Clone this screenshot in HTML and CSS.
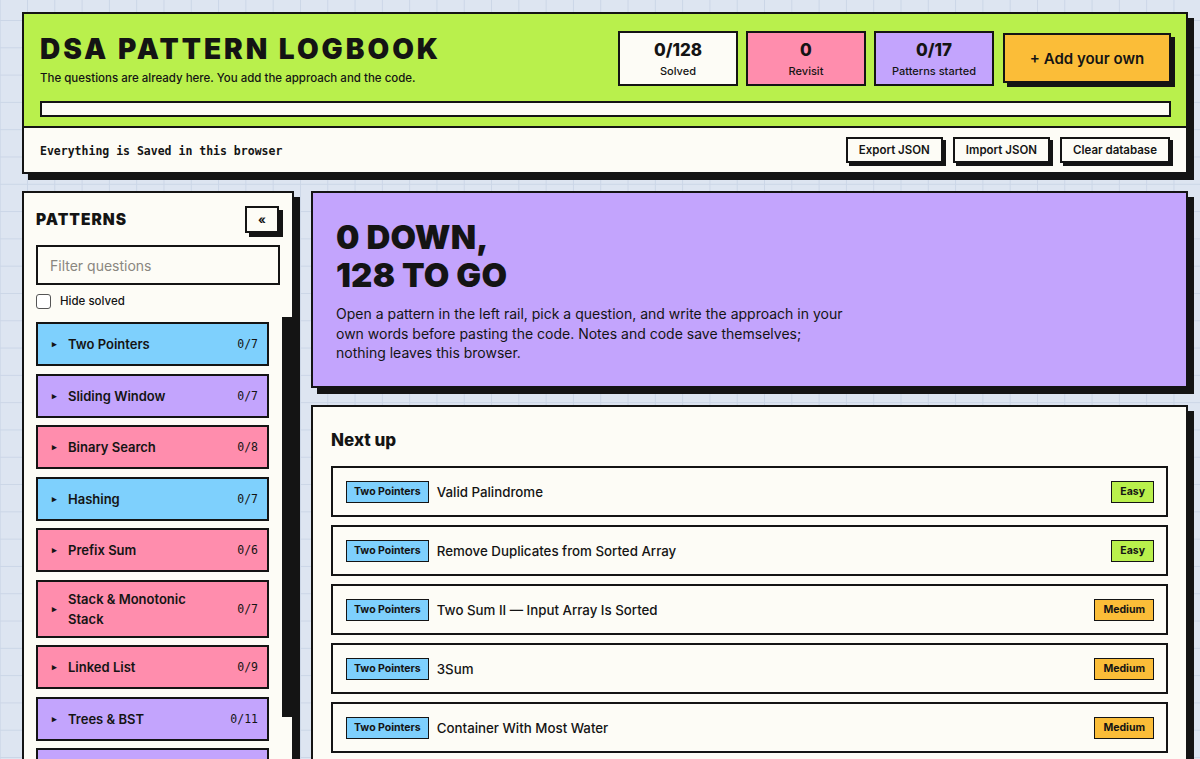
FILE: index.html
```html
<!DOCTYPE html>
<html lang="en">
<head>
<meta charset="utf-8">
<title>DSA Pattern Logbook</title>
<link rel="stylesheet" href="styles.css">
</head>
<body>
<div class="page">
  <header class="masthead">
    <div class="mast-top">
      <div class="mast-row">
        <div class="brand">
          <h1 class="brand-title">DSA PATTERN LOGBOOK</h1>
          <p class="brand-sub">The questions are already here. You add the approach and the code.</p>
        </div>
        <div class="stats">
          <div class="stat stat-cream"><div class="stat-num">0/128</div><div class="stat-label">Solved</div></div>
          <div class="stat stat-pink"><div class="stat-num">0</div><div class="stat-label">Revisit</div></div>
          <div class="stat stat-purple"><div class="stat-num">0/17</div><div class="stat-label">Patterns started</div></div>
          <button class="add-btn">+ Add your own</button>
        </div>
      </div>
      <div class="progress"><div class="progress-fill" style="width:0%"></div></div>
    </div>
    <div class="mast-bottom">
      <span class="saved-note">Everything is Saved in this browser</span>
      <div class="tools">
        <button class="tool-btn">Export JSON</button>
        <button class="tool-btn">Import JSON</button>
        <button class="tool-btn">Clear database</button>
      </div>
    </div>
  </header>

  <div class="layout">
    <aside class="rail">
      <div class="rail-head">
        <div class="rail-title-row">
          <h2 class="rail-title">PATTERNS</h2>
          <button class="collapse-btn">«</button>
        </div>
        <input class="filter" type="text" placeholder="Filter questions">
        <label class="hide-solved"><span class="box"></span>Hide solved</label>
      </div>
      <div class="pattern-list">
        <div class="pattern p-blue"><span class="tri">▸</span><span class="p-name">Two Pointers</span><span class="p-count">0/7</span></div>
        <div class="pattern p-purple"><span class="tri">▸</span><span class="p-name">Sliding Window</span><span class="p-count">0/7</span></div>
        <div class="pattern p-pink"><span class="tri">▸</span><span class="p-name">Binary Search</span><span class="p-count">0/8</span></div>
        <div class="pattern p-blue"><span class="tri">▸</span><span class="p-name">Hashing</span><span class="p-count">0/7</span></div>
        <div class="pattern p-pink"><span class="tri">▸</span><span class="p-name">Prefix Sum</span><span class="p-count">0/6</span></div>
        <div class="pattern p-pink"><span class="tri">▸</span><span class="p-name">Stack &amp; Monotonic Stack</span><span class="p-count">0/7</span></div>
        <div class="pattern p-pink"><span class="tri">▸</span><span class="p-name">Linked List</span><span class="p-count">0/9</span></div>
        <div class="pattern p-purple"><span class="tri">▸</span><span class="p-name">Trees &amp; BST</span><span class="p-count">0/11</span></div>
        <div class="pattern p-purple"><span class="tri">▸</span><span class="p-name">Graphs</span><span class="p-count">0/10</span></div>
        <div class="pattern p-blue"><span class="tri">▸</span><span class="p-name">Heaps</span><span class="p-count">0/7</span></div>
        <div class="pattern p-pink"><span class="tri">▸</span><span class="p-name">Backtracking</span><span class="p-count">0/8</span></div>
        <div class="pattern p-purple"><span class="tri">▸</span><span class="p-name">Dynamic Programming</span><span class="p-count">0/9</span></div>
        <div class="pattern p-blue"><span class="tri">▸</span><span class="p-name">2D DP</span><span class="p-count">0/7</span></div>
        <div class="pattern p-pink"><span class="tri">▸</span><span class="p-name">Greedy</span><span class="p-count">0/7</span></div>
        <div class="pattern p-purple"><span class="tri">▸</span><span class="p-name">Intervals</span><span class="p-count">0/6</span></div>
        <div class="pattern p-blue"><span class="tri">▸</span><span class="p-name">Tries</span><span class="p-count">0/4</span></div>
        <div class="pattern p-pink"><span class="tri">▸</span><span class="p-name">Union Find</span><span class="p-count">0/8</span></div>
      </div>
      <div class="rail-thumb"></div>
    </aside>

    <main class="main">
      <section class="hero">
        <h2 class="hero-title">0 DOWN,<br>128 TO GO</h2>
        <p class="hero-text">Open a pattern in the left rail, pick a question, and write the approach in your own words before pasting the code. Notes and code save themselves; nothing leaves this browser.</p>
      </section>

      <section class="next">
        <h3 class="next-title">Next up</h3>
        <div class="q-list">
          <div class="q"><span class="tag">Two Pointers</span><span class="q-name">Valid Palindrome</span><span class="diff diff-easy">Easy</span></div>
          <div class="q"><span class="tag">Two Pointers</span><span class="q-name">Remove Duplicates from Sorted Array</span><span class="diff diff-easy">Easy</span></div>
          <div class="q"><span class="tag">Two Pointers</span><span class="q-name">Two Sum II — Input Array Is Sorted</span><span class="diff diff-med">Medium</span></div>
          <div class="q"><span class="tag">Two Pointers</span><span class="q-name">3Sum</span><span class="diff diff-med">Medium</span></div>
          <div class="q"><span class="tag">Two Pointers</span><span class="q-name">Container With Most Water</span><span class="diff diff-med">Medium</span></div>
        </div>
      </section>
    </main>
  </div>
</div>
</body>
</html>
```

FILE: styles.css
```css
* { box-sizing: border-box; }

html, body { height: 100%; }

body {
  margin: 0;
  font-family: "Inter", "Noto Sans", sans-serif;
  color: #141414;
  background-color: #dde5f1;
  background-image:
    linear-gradient(#cbd6e7 1px, transparent 1px),
    linear-gradient(90deg, #cbd6e7 1px, transparent 1px);
  background-size: 27.3px 27.3px;
  background-position: 27px 20px;
  overflow: hidden;
}

.page {
  padding: 12px 12px 0 22px;
}

/* ---------- Masthead ---------- */
.masthead {
  border: 2px solid #141414;
  box-shadow: 6px 6px 0 #141414;
  background: #fdfcf6;
}

.mast-top {
  background: #b9f04c;
  padding: 17px 15px 9px 16px;
  border-bottom: 2px solid #141414;
}

.mast-row {
  display: flex;
  justify-content: space-between;
  align-items: flex-start;
}

.brand-title {
  margin: 1px 0 0 0;
  font-size: 28px;
  line-height: 34px;
  font-weight: 900;
  letter-spacing: 3px;
}

.brand-sub {
  margin: 4px 0 0 0;
  font-size: 11.5px;
  line-height: 16px;
  font-weight: 500;
}

.stats {
  display: flex;
  align-items: flex-start;
  gap: 8px;
}

.stat {
  width: 120px;
  height: 55px;
  border: 2px solid #141414;
  display: flex;
  flex-direction: column;
  align-items: center;
  justify-content: center;
  gap: 4px;
}

.stat-num {
  font-size: 17px;
  font-weight: 800;
  line-height: 20px;
}

.stat-label {
  font-size: 11px;
  font-weight: 500;
  line-height: 14px;
}

.stat-cream { background: #fdfcf6; }
.stat-pink { background: #ff8dad; }
.stat-purple { background: #c3a4fd; }

.add-btn {
  margin-top: 2px;
  margin-left: 1px;
  width: 168px;
  height: 50px;
  border: 2px solid #141414;
  background: #fbbd38;
  box-shadow: 4px 4px 0 #141414;
  font-family: inherit;
  font-size: 15px;
  font-weight: 600;
  color: #141414;
  cursor: pointer;
}

.progress {
  margin-top: 15px;
  height: 16px;
  border: 2px solid #141414;
  background: #fdfcf6;
}

.progress-fill {
  height: 100%;
  background: #141414;
}

.mast-bottom {
  height: 44px;
  padding: 0 16px;
  display: flex;
  align-items: center;
  justify-content: space-between;
}

.saved-note {
  font-family: "DejaVu Sans Mono", "Liberation Mono", monospace;
  font-size: 11.5px;
  font-weight: 600;
  margin-top: 2px;
}

.tools {
  display: flex;
  gap: 10px;
  margin-top: 0;
}

.tool-btn {
  height: 26px;
  padding: 0 11px;
  border: 2px solid #141414;
  background: #fdfcf6;
  box-shadow: 3px 3px 0 #141414;
  font-family: inherit;
  font-size: 11.5px;
  font-weight: 600;
  color: #141414;
  cursor: pointer;
}

/* ---------- Layout ---------- */
.layout {
  margin-top: 17px;
  display: grid;
  grid-template-columns: 272px 1fr;
  gap: 17px;
  align-items: start;
}

/* ---------- Rail ---------- */
.rail {
  position: relative;
  height: 740px;
  border: 2px solid #141414;
  box-shadow: 6px 6px 0 #141414;
  background: #fdfcf6;
  display: flex;
  flex-direction: column;
}

.rail-head {
  padding: 12px 12px 0 12px;
}

.rail-title-row {
  display: flex;
  justify-content: space-between;
  align-items: center;
}

.rail-title {
  margin: 0;
  font-size: 15.5px;
  font-weight: 900;
  letter-spacing: 1px;
}

.collapse-btn {
  width: 34px;
  height: 27px;
  border: 2px solid #141414;
  background: #fdfcf6;
  box-shadow: 4px 4px 0 #141414;
  font-family: inherit;
  font-size: 12px;
  font-weight: 700;
  color: #141414;
  padding: 0;
  margin-top: 1px;
  margin-right: 1px;
}

.filter {
  display: block;
  width: 100%;
  height: 40px;
  margin-top: 12px;
  border: 2px solid #141414;
  background: #fdfcf6;
  padding: 0 12px;
  font-family: inherit;
  font-size: 14px;
  color: #141414;
  outline: none;
}

.filter::placeholder { color: #8a8780; }

.hide-solved {
  display: flex;
  align-items: center;
  gap: 9px;
  margin-top: 8px;
  font-size: 11.5px;
  font-weight: 500;
  height: 16px;
}

.box {
  width: 15px;
  height: 15px;
  border: 1.5px solid #555;
  border-radius: 3px;
  background: #fff;
}

.pattern-list {
  flex: 1;
  margin-top: 8px;
  padding: 5px 23px 12px 12px;
  overflow: hidden;
  display: flex;
  flex-direction: column;
  gap: 7.5px;
}

.rail-thumb {
  position: absolute;
  top: 124px;
  right: 0;
  width: 10px;
  height: 400px;
  background: #141414;
}

.pattern {
  flex: none;
  display: flex;
  align-items: center;
  min-height: 44px;
  padding: 7px 9px 7px 14px;
  border: 2px solid #141414;
  font-size: 13px;
  font-weight: 600;
  line-height: 20px;
}

.tri {
  font-size: 9px;
  width: 16px;
  flex: none;
}

.p-name {
  flex: 1;
  padding-right: 18px;
}

.p-count {
  font-family: "DejaVu Sans Mono", "Liberation Mono", monospace;
  font-size: 11.5px;
  font-weight: 400;
}

.p-blue { background: #7ed0fd; }
.p-purple { background: #c3a4fd; }
.p-pink { background: #ff8dad; }

/* ---------- Main ---------- */
.main {
  display: flex;
  flex-direction: column;
  gap: 17px;
}

.hero {
  border: 2px solid #141414;
  box-shadow: 6px 6px 0 #141414;
  background: #c3a4fd;
  padding: 25px 23px 23px 23px;
}

.hero-title {
  margin: 0;
  font-size: 33px;
  line-height: 38px;
  font-weight: 900;
  letter-spacing: 0.2px;
}

.hero-text {
  margin: 10px 0 0 0;
  max-width: 509px;
  font-size: 14px;
  line-height: 19.7px;
  font-weight: 400;
}

.next {
  border: 2px solid #141414;
  box-shadow: 6px 6px 0 #141414;
  background: #fdfcf6;
  padding: 22px 18px 20px 18px;
  min-height: 400px;
}

.next-title {
  margin: 0;
  font-size: 17px;
  line-height: 22px;
  font-weight: 800;
}

.q-list {
  margin-top: 15px;
  display: flex;
  flex-direction: column;
  gap: 8px;
}

.q {
  display: flex;
  align-items: center;
  height: 51px;
  padding: 0 12px 0 13px;
  border: 2px solid #141414;
  background: #fdfcf6;
}

.tag {
  height: 22px;
  padding: 0 7px;
  display: inline-flex;
  align-items: center;
  border: 1.5px solid #141414;
  background: #7ed0fd;
  font-size: 10.5px;
  font-weight: 700;
}

.q-name {
  flex: 1;
  margin-left: 8px;
  font-size: 13.3px;
  font-weight: 500;
}

.diff {
  height: 22px;
  padding: 0 8px;
  display: inline-flex;
  align-items: center;
  border: 1.5px solid #141414;
  font-size: 10.5px;
  font-weight: 700;
}

.diff-easy { background: #b9f04c; }
.diff-med { background: #fbbd38; }
```
